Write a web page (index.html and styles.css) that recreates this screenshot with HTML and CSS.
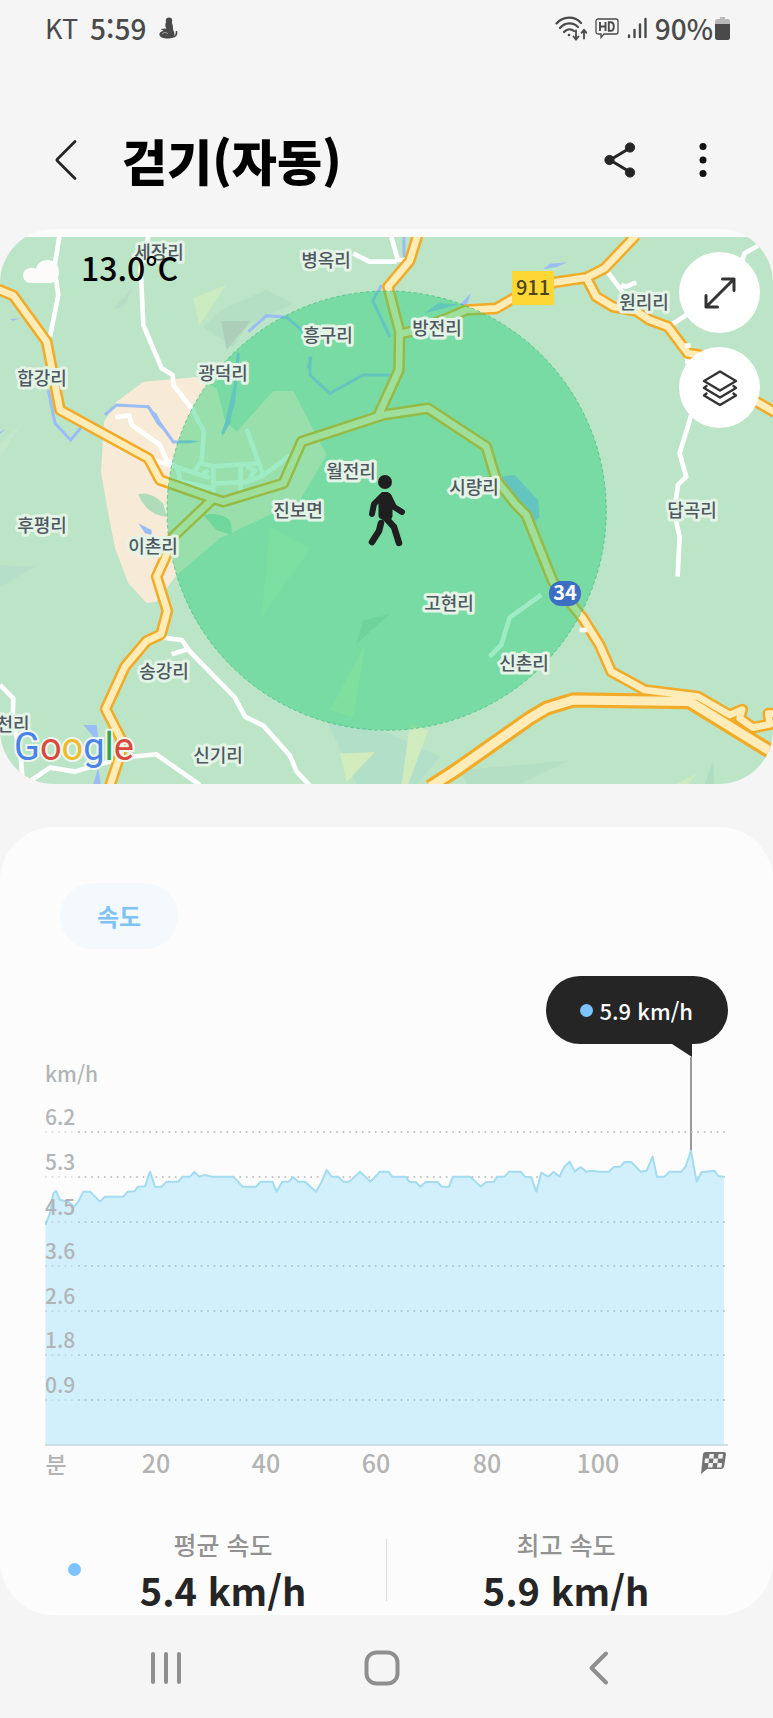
FILE: index.html
```html
<!DOCTYPE html>
<html lang="ko">
<head>
<meta charset="utf-8">
<meta name="viewport" content="width=device-width, initial-scale=1">
<title>걷기(자동)</title>
<link rel="stylesheet" href="styles.css">
</head>
<body>
<div class="statusbar">
  <div class="status-group">
    <span class="carrier">KT</span>
    <span class="clock">5:59</span>
    <svg class="status-note" width="20" height="22" viewBox="0 0 20 22" aria-hidden="true">
      <circle cx="11" cy="3.6" r="3.2" fill="#4a4a4a"/>
      <path d="M8 5c-1 3-1 5 .5 6.500L2.500 12l3 1.800C2.500 14.500 1 16 1.500 18c.5 2 3.500 3.500 8 3.500s7-1 7-4c0-2.500-1.500-4-1.500-6C15 9 14.500 7 13.500 5z" fill="#4a4a4a"/>
      <path d="M14 20c3.500 0 5-2 4.500-6" fill="none" stroke="#4a4a4a" stroke-width="1.600"/>
      <path d="M4 17c2-2 4-2 6 0" fill="none" stroke="#aaa" stroke-width="1"/>
    </svg>
  </div>
  <div class="status-group status-right">
    <svg width="32" height="25" viewBox="0 0 32 25" fill="none" stroke="#4a4a4a" stroke-width="2.200" stroke-linecap="round" aria-hidden="true">
      <path d="M1.500 7.500C8-.3 20-.3 26 7M5 12c5-6 13-6 18-1M9 16c3-3.500 7-3.500 10-1"/>
      <circle cx="14" cy="19" r="1.300" fill="#4a4a4a" stroke="none"/>
      <path d="M21 14.500v8M18.500 20.500l2.500 3 2.500-3M29 22.500v-8M26.500 16.800l2.500-3 2.500 3" stroke-width="1.800"/>
    </svg>
    <svg width="24" height="22" viewBox="0 0 24 22" fill="none" stroke="#4a4a4a" aria-hidden="true">
      <path d="M3 2h18a2 2 0 0 1 2 2v11a2 2 0 0 1-2 2H9l-3 3.500V17H3a2 2 0 0 1-2-2V4a2 2 0 0 1 2-2z" stroke-width="1.300"/>
      <path d="M5 5v9M10.500 5v9M5 9.500h5.500M13.800 5.200v8.600h1.800c2 0 3.200-1.500 3.200-4.300s-1.200-4.300-3.200-4.300z" stroke-width="1.900"/>
    </svg>
    <svg width="20" height="22" viewBox="0 0 20 22" stroke="#4a4a4a" stroke-width="2.400" stroke-linecap="round" aria-hidden="true">
      <path d="M2 18.500v1.500M7.500 13v7M13 7.500V20M18.500 2v18"/>
    </svg>
    <span class="battery-text">90%</span>
    <svg class="battery" width="15" height="23" viewBox="0 0 15 23" aria-hidden="true">
      <path d="M5 0h5v2h2.500A2.500 2.500 0 0 1 15 4.500V8H0V4.500A2.500 2.500 0 0 1 2.500 2H5z" fill="#b9b9b9"/>
      <path d="M0 7h15v13.500a2.500 2.500 0 0 1-2.500 2.500h-10A2.500 2.500 0 0 1 0 20.500z" fill="#4a4a4a"/>
    </svg>
  </div>
</div>

<header class="appbar">
  <button class="icon-btn" type="button" aria-label="뒤로">
    <svg width="24" height="42" viewBox="0 0 24 42" fill="none" stroke="#252525" stroke-width="2.800" stroke-linecap="round" stroke-linejoin="round"><path d="M21 2.500L3.500 20q-1 1 0 2L21 39.500"/></svg>
  </button>
  <h1 class="title">걷기(자동)</h1>
  <button class="icon-btn" type="button" aria-label="공유">
    <svg width="32" height="36" viewBox="0 0 32 36" fill="#252525" stroke="#252525"><path d="M26 6L6 18l20 12" fill="none" stroke-width="3"/><circle cx="26" cy="5.500" r="4.600"/><circle cx="5.500" cy="18" r="4.600"/><circle cx="26" cy="30.500" r="4.600"/></svg>
  </button>
  <button class="icon-btn" type="button" aria-label="더보기">
    <svg width="8" height="36" viewBox="0 0 8 36" fill="#111"><circle cx="4" cy="4.500" r="3.500"/><circle cx="4" cy="18" r="3.500"/><circle cx="4" cy="31.500" r="3.500"/></svg>
  </button>
</header>

<main>
  <section class="map-card" aria-label="지도">
    <div class="map-frame">
      <svg class="map" viewBox="0 0 773 547">
        <rect width="773" height="547" fill="#bce4c6"/>
        <g transform="scale(.3333)">
          <g opacity=".4">
            <path d="M580 182L678 145 598 266z" fill="#e2f5b8"/>
            <path d="M660 220L800 158 880 200 745 262 700 330 610 270z" fill="#a9d8c4"/>
            <path d="M664 252H752L680 340z" fill="#96b0a6"/>
            <path d="M340 215L400 150 370 210z" fill="#a9d8c4"/>
            <path d="M0 985L105 990 0 1050z" fill="#a9d6cc"/>
            <path d="M0 620L65 560 0 660z" fill="#cdecce"/>
            <path d="M810 870L930 935 785 1140z" fill="#d4f0c0"/>
            <path d="M1090 1150L1170 1130 1070 1220z" fill="#96bfa4"/>
            <path d="M1095 1225L1060 1440 990 1420z" fill="#dff5b8"/>
            <path d="M980 1450L1170 1490 1320 1560 1250 1641H1070z" fill="#a4d8cb"/>
            <path d="M1020 1550L1125 1545 1040 1635z" fill="#f4f8b0"/>
            <path d="M1230 1460L1285 1480 1225 1641H1205z" fill="#eef6b4"/>
            <path d="M1380 1600L1710 1570 1560 1641H1400z" fill="#a9d8c4"/>
            <path d="M2030 1641L2090 1610 2065 1641z" fill="#e2f5b8"/>
            <path d="M2115 1641L2140 1570 2142 1641z" fill="#9dcfc0"/>
          </g>
          <path d="M430 434L590 420 650 454 675 550 710 584 820 462H880L980 654 900 790 660 904 530 1014 470 1094 440 1098 385 1039 345 934 320 804 303 704 312 554 350 494z" fill="#f7ead6"/>
          <path d="M415 772Q450 760 490 800L500 839Q440 835 415 772zM610 834Q650 826 680 842 698 850 695 894L650 880z" fill="#afddbb"/>
          <g fill="none" stroke="#9bbdf5" stroke-width="9">
            <path d="M315 534L350 504 445 509 520 615 570 614M145 459L165 559 212 609 245 570M745 284L800 236 860 241 910 284M715 349L700 504 668 590M930 359L930 414 990 469 1090 414H1170M1145 144L1118 190 1170 300M1212 0V60"/>
          </g>
          <path d="M1504 719L1544 714 1615 790 1619 840 1600 855 1560 800zM1629 97L1650 80 1702 76 1670 90zM1379 204L1414 167 1400 204zM1274 229L1314 199 1379 202zM415 859L455 879V894L435 889zM440 509L470 530 500 590 470 560zM570 610L600 613 570 619zM250 1464H290L298 1520zM280 1641L295 1590 302 1641zM700 450L710 440 690 560 665 600zM920 390L938 350 930 400zM30 247L60 244 40 251zM0 585L18 574 0 592z" fill="#9bbdf5"/>
          <g fill="none" stroke="#fff" stroke-width="14" stroke-linejoin="round">
            <path d="M178 0L163 90 175 174 150 299M445 0L422 94 430 264 485 394 518 414 520 444 575 514 612 584 605 669 580 709"/>
            <path d="M345 540L388 536 395 564 480 624 500 670 530 690M460 670L530 690 620 720M525 730L640 755M530 685L540 725M600 678L640 688 770 680M740 575L768 655 790 715M640 690V765M722 690V770M640 740L740 735 790 715 870 655M625 700L610 710 630 725M740 690L765 700 750 725"/>
            <path d="M1060 49L1108 74H1190M1174 0L1194 69H1224M1819 99L1875 175M1864 144L1879 149 1909 136M2014 264L2059 234M2274 26L2234 49 2224 80"/>
            <path d="M2062 324V380M2074 534L2039 649 2059 719 2034 744 2027 794 2029 854 2039 899 2033 1019M1624 1074L1529 1142 1504 1224 1469 1259"/>
            <path d="M490 1202L545 1209 570 1244 705 1382 735 1439 790 1466 870 1556 890 1604 930 1646M515 1252L560 1238M0 1344L40 1384 38 1444 62 1560 68 1630M95 1629L150 1592 225 1604 290 1584 380 1561 468 1552 600 1644"/>
          </g>
          <defs>
            <g id="roads" fill="none" stroke-linejoin="round">
              <path d="M640 785L520 899 495 964 470 1019 502 1122 483 1192 440 1212 375 1289 317 1416 362 1504V1549L330 1646M1253 -5L1229 72 1164 149 1199 284 1197 399 1135 535M1202 290L1249 280 1329 249 1399 219 1489 214 1549 179 1664 136 1759 122 1814 94 1908 -5M1759 122L1789 179 1839 209 1909 222 1949 249 2004 269 2064 349 2099 354 2269 494 2325 526"/>
              <path d="M-5 157L40 176 140 314 180 519 445 664 480 729 640 785 670 794 850 739 905 614 1149 534 1284 514 1459 629 1489 729 1549 804 1579 834 1659 1034 1749 1144 1799 1224 1834 1304 1934 1359 2094 1379 2189 1434 2227 1418 2219 1444 2259 1472 2310 1462 2305 1430 2325 1430"/>
            </g>
          </defs>
          <use href="#roads" stroke="#f2ab27" stroke-width="35"/>
          <path d="M1290 1650L1369 1599 1589 1444 1639 1414 1719 1389 2069 1394 2325 1552" fill="none" stroke="#f2ab27" stroke-width="46" stroke-linejoin="round"/>
          <use href="#roads" stroke="#ffecb9" stroke-width="20"/>
          <path d="M1290 1650L1369 1599 1589 1444 1639 1414 1719 1389 2069 1394 2325 1552" fill="none" stroke="#ffecb9" stroke-width="27" stroke-linejoin="round"/>
          <path d="M1739 1179H1761M2055 326H2072" stroke="#fff" stroke-width="14"/>
          <circle cx="1160" cy="821" r="659" fill="#18cf73" fill-opacity=".42" stroke="#35b87b" stroke-width="2" stroke-dasharray="10 8"/>
        </g>
        <g class="place">
          <text x="159" y="22">세장리</text><text x="326" y="30">병옥리</text>
          <text x="328" y="105">흥구리</text><text x="223" y="143">광덕리</text>
          <text x="42" y="148">합강리</text><text x="351" y="241">월전리</text>
          <text x="298" y="280">진보면</text><text x="437" y="98">방전리</text>
          <text x="644" y="72">원리리</text><text x="474" y="257">시량리</text>
          <text x="692" y="280">답곡리</text><text x="42" y="295">후평리</text>
          <text x="153" y="316">이촌리</text><text x="164" y="441">송강리</text>
          <text x="13" y="494">천리</text><text x="218" y="525">신기리</text>
          <text x="449" y="373">고현리</text><text x="524" y="433">신촌리</text>
        </g>
        <rect x="512" y="34" width="42" height="34" fill="#fdd835"/>
        <text class="route" x="533" y="58">911</text>
        <rect x="549" y="344" width="32" height="25" rx="12" fill="#3c6fc4"/>
        <text class="route route-blue" x="565" y="363">34</text>
        <g fill="none" stroke="#1f1f1f" stroke-linecap="round" stroke-linejoin="round">
          <circle cx="385" cy="245" r="7" fill="#1f1f1f" stroke="none"/>
          <path d="M381 260L374 267 372 277M389 260L394 270 402 275" stroke-width="6"/>
          <path d="M383 257.500H387Q390 259 390 263V279L388 283 381 279V262z" fill="#1f1f1f" stroke-width="5"/>
          <path d="M384 279L394 290 399 306" stroke-width="6.500"/>
          <path d="M381 286L379 294 372 305" stroke-width="6.500"/>
        </g>
        <path d="M31 46a7 7 0 0 1-1-15q3-1 6 1c2-12 23-13 23 3 0 7-4 11-9 11z" fill="#fdfafa"/>
        <text class="temperature" x="81" y="44">13.0°C</text>
        <text class="logo" x="14" y="523"><tspan fill="#4a83e8">G</tspan><tspan fill="#d9483b">o</tspan><tspan fill="#eebb2d">o</tspan><tspan fill="#4a83e8">g</tspan><tspan fill="#35a252">l</tspan><tspan fill="#d9483b">e</tspan></text>
      </svg>
      <div class="map-tools">
        <button class="round-btn" type="button" aria-label="지도 확대">
          <svg width="32" height="32" viewBox="0 0 32 32" fill="none" stroke="#333" stroke-width="3" stroke-linecap="round" stroke-linejoin="round"><path d="M2 30L30 2M18.500 2H30V13.500M2 18.500V30H13.500"/></svg>
        </button>
        <button class="round-btn" type="button" aria-label="지도 레이어">
          <svg width="36" height="36" viewBox="0 0 36 36" fill="none" stroke="#333" stroke-width="2.400" stroke-linecap="round" stroke-linejoin="round"><path d="M18 1.500L34 11 18 20.500 2 11zM4.500 16L2 18l16 9.500L34 18l-2.500-2M4.500 23.500L2 25.500l16 9.500 16-9.500-2.500-2"/></svg>
        </button>
      </div>
    </div>
  </section>

  <section class="speed-card" aria-label="속도">
    <button class="chip" type="button">속도</button>
    <div class="tooltip"><span class="dot"></span>5.9 km/h</div>
    <svg class="chart" viewBox="0 0 683 423" role="img" aria-label="속도 그래프">
      <path d="M646 0V96" stroke="#999" stroke-width="2"/>
      <g class="grid"><path d="M34 75H680M34 120H680"/><path class="faint" d="M1 75H32M1 120H32"/></g>
      <g transform="translate(-45 3) scale(.3333)">
        <path fill="#d2f0fc" d="M136 1155V495L150 460 160 400 168 393 180 420 205 425 222 440 235 425 250 395H270L300 425 315 410H370L383 395 403 394 415 380 435 379 450 335 465 380H485L500 365H535L548 350H570L583 336 598 350 615 345 635 350H700L728 380H768L782 365H817L830 395 847 365H865L880 352 895 365H915L948 395 965 365 980 330 995 350H1015L1030 365H1048L1080 335 1112 365 1140 335H1165L1177 350H1217L1228 365 1248 367 1261 380 1277 366H1313L1325 380H1347L1359 350H1411L1442 380 1459 366H1481L1491 350H1514L1527 335H1562L1575 350 1594 352 1609 395 1624 338 1645 350 1661 336 1679 350 1692 322 1709 305 1724 335 1742 321 1759 335 1777 332 1795 335H1827L1842 321 1861 320 1874 306H1894L1922 335 1940 332 1958 290 1971 350H1993L2009 335H2044L2057 320 2073 273 2090 365 2105 337 2143 332 2155 348 2172 350V1155z"/>
        <path fill="none" stroke="#a3dbef" stroke-width="6" stroke-linejoin="round" d="M136 495L150 460 160 400 168 393 180 420 205 425 222 440 235 425 250 395H270L300 425 315 410H370L383 395 403 394 415 380 435 379 450 335 465 380H485L500 365H535L548 350H570L583 336 598 350 615 345 635 350H700L728 380H768L782 365H817L830 395 847 365H865L880 352 895 365H915L948 395 965 365 980 330 995 350H1015L1030 365H1048L1080 335 1112 365 1140 335H1165L1177 350H1217L1228 365 1248 367 1261 380 1277 366H1313L1325 380H1347L1359 350H1411L1442 380 1459 366H1481L1491 350H1514L1527 335H1562L1575 350 1594 352 1609 395 1624 338 1645 350 1661 336 1679 350 1692 322 1709 305 1724 335 1742 321 1759 335 1777 332 1795 335H1827L1842 321 1861 320 1874 306H1894L1922 335 1940 332 1958 290 1971 350H1993L2009 335H2044L2057 320 2073 273 2090 365 2105 337 2143 332 2155 348 2172 350"/>
      </g>
      <g class="grid grid-over"><path d="M34 165H680M34 209H680M34 254H680M34 298H680M34 343H680"/><path class="faint" d="M1 165H32M1 209H32M1 254H32M1 298H32M1 343H32"/></g>
      <path d="M0 388H683" stroke="#cfdde6" stroke-width="2"/>
      <g class="axis">
        <text x="0" y="25">km/h</text>
        <text x="0" y="68">6.2</text><text x="0" y="113">5.3</text><text x="0" y="158">4.5</text><text x="0" y="202">3.6</text><text x="0" y="247">2.6</text><text x="0" y="291">1.8</text><text x="0" y="336">0.9</text>
      </g>
      <g class="axis axis-x">
        <text class="unit" x="11" y="416">분</text><text x="111" y="416">20</text><text x="221" y="416">40</text><text x="331" y="416">60</text><text x="442" y="416">80</text><text x="553" y="416">100</text>
      </g>
      <g transform="translate(656 395)">
        <path d="M4 0H23Q25 0 25 2L23 15Q22 17 20 17H6L0 22 2 2Q3 0 4 0z" fill="#737373"/>
        <path d="M8.500 2H13L12.500 6.500H8zM17.500 2H22L21.500 6.500H17zM12.500 6.500H17L16.500 11H12zM7.500 11H12L11.500 15.500H7zM16.500 11H21L20.500 15.500H16zM4 6.500H8L7.500 11H3.500z" fill="#f4f4f4"/>
      </g>
    </svg>
    <div class="stats">
      <span class="dot"></span>
      <div class="stat"><span class="stat-label">평균 속도</span><strong class="stat-value">5.4 km/h</strong></div>
      <span class="divider"></span>
      <div class="stat"><span class="stat-label">최고 속도</span><strong class="stat-value">5.9 km/h</strong></div>
    </div>
  </section>
</main>

<nav class="navbar" aria-label="시스템 탐색">
  <button class="icon-btn" type="button" aria-label="최근 앱"><svg width="34" height="36" viewBox="0 0 34 36" stroke="#8f8f8f" stroke-width="4" stroke-linecap="round"><path d="M4 4v28M17 4v28M30 4v28"/></svg></button>
  <button class="icon-btn" type="button" aria-label="홈"><svg width="36" height="36" viewBox="0 0 36 36" fill="none" stroke="#8f8f8f" stroke-width="4"><rect x="2.500" y="2.500" width="31" height="31" rx="10"/></svg></button>
  <button class="icon-btn" type="button" aria-label="뒤로"><svg width="22" height="36" viewBox="0 0 22 36" fill="none" stroke="#8f8f8f" stroke-width="4" stroke-linecap="round" stroke-linejoin="round"><path d="M18 3.500L3.500 18 18 32.500"/></svg></button>
</nav>
</body>
</html>
```
FILE: styles.css
```css
* { box-sizing: border-box; }

body {
  margin: 0;
  background: #f5f5f5;
  color: #252525;
  font-family: "Noto Sans CJK KR", "Noto Sans", sans-serif;
}

button {
  font: inherit;
  border: 0;
  padding: 0;
  cursor: pointer;
}

svg { display: block; }

.statusbar {
  display: flex;
  justify-content: space-between;
  align-items: center;
  height: 56px;
  padding: 0 43px 0 45px;
  color: #4a4a4a;
  font-size: 28px;
  font-weight: 500;
  line-height: 54px;
}

.carrier {
  font-size: 27px;
  font-weight: 400;
}

.status-group {
  display: flex;
  align-items: center;
  gap: 12px;
}

.status-right { gap: 8px; }
.battery { margin-left: -6px; }

.appbar {
  display: flex;
  align-items: center;
  min-height: 173px;
  padding: 35px 66px 0 54px;
}

.icon-btn {
  display: flex;
  align-items: center;
  justify-content: center;
  background: none;
}

.title {
  flex: 1;
  margin: 0 0 0 44px;
  color: #000;
  font-size: 49px;
  font-weight: 900;
  line-height: 60px;
}

.appbar .icon-btn + .icon-btn { margin-left: 63px; }

.map-card {
  padding-top: 8px;
  border-radius: 54px;
  background: #fbfbfb;
  overflow: hidden;
}

.map-frame { position: relative; }

.map {
  width: 100%;
  height: auto;
}

.place {
  fill: #4f5860;
  stroke: #e3f4e7;
  stroke-width: 6px;
  stroke-linejoin: round;
  paint-order: stroke;
  font-size: 18px;
  font-weight: 500;
  text-anchor: middle;
}

.route {
  fill: #4d4420;
  font-size: 20px;
  font-weight: 500;
  text-anchor: middle;
}

.route-blue {
  fill: #fff;
  font-weight: 700;
}

.temperature {
  fill: #000;
  font-size: 32px;
  font-weight: 500;
}

.logo {
  font-family: Roboto, sans-serif;
  font-size: 38px;
  font-weight: 400;
  stroke: #eef7ef;
  stroke-width: 4px;
  paint-order: stroke;
}

.map-tools {
  position: absolute;
  top: 15px;
  right: 13px;
  display: flex;
  flex-direction: column;
  gap: 14px;
}

.round-btn {
  display: flex;
  align-items: center;
  justify-content: center;
  width: 81px;
  height: 81px;
  border-radius: 50%;
  background: #fff;
}

.speed-card {
  display: flex;
  flex-direction: column;
  margin-top: 43px;
  padding: 56px 45px 0;
  border-radius: 54px;
  background: #fcfcfc;
}

.chip {
  align-self: flex-start;
  margin-left: 15px;
  padding: 0 37px;
  border-radius: 33px;
  background: #f4f9fd;
  color: #7fc3f6;
  font-size: 24px;
  font-weight: 700;
  line-height: 66px;
}

.dot {
  width: 13px;
  height: 13px;
  border-radius: 50%;
  background: #7cc4ff;
}

.tooltip {
  position: relative;
  display: flex;
  align-items: center;
  align-self: flex-end;
  gap: 6px;
  margin-top: 27px;
  padding: 0 35px 0 34px;
  border-radius: 34px;
  background: #252525;
  color: #fff;
  font-size: 22px;
  font-weight: 500;
  line-height: 68px;
}

.tooltip::after {
  content: "";
  position: absolute;
  top: 100%;
  right: 36px;
  border-top: 13px solid #252525;
  border-left: 20px solid transparent;
}

.chart {
  width: 100%;
  height: auto;
  margin-top: 13px;
}

.grid {
  fill: none;
  stroke: #bfbfbf;
  stroke-width: 2px;
  stroke-linecap: round;
  stroke-dasharray: 0 6.450;
}

.grid-over { stroke: #a9c3cd; }
.faint { opacity: 0.5; }

.axis {
  fill: #b1b5b7;
  font-size: 21px;
  font-weight: 500;
}

.axis-x {
  fill: #b3b3b3;
  font-size: 25px;
  text-anchor: middle;
}

.unit {
  font-size: 23px;
}

.stats {
  display: grid;
  grid-template-columns: 13px 9fr 43px 10fr;
  align-items: center;
  margin-top: 44px;
  padding: 0 4px 0 23px;
}

.stat {
  display: flex;
  flex-direction: column;
  align-items: center;
}

.stat-label {
  color: #929292;
  font-size: 25px;
  font-weight: 500;
  line-height: 40px;
}

.stat-value {
  font-size: 38px;
  line-height: 51px;
}

.divider {
  justify-self: center;
  width: 1px;
  height: 62px;
  background: #dedede;
}

.navbar {
  display: grid;
  grid-template-columns: repeat(3, 1fr);
  align-items: center;
  height: 103px;
  padding: 2px 66px 0 58px;
}
```
